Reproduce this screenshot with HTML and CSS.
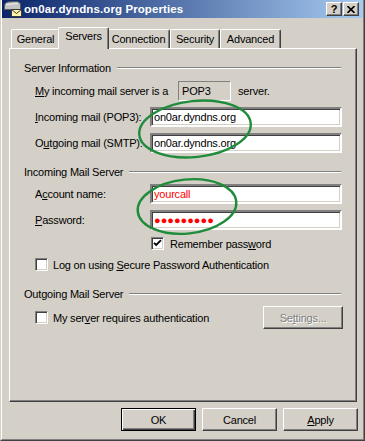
FILE: index.html
```html
<!DOCTYPE html>
<html>
	<head>
		<title>on0ar.dyndns.org Properties</title>
		<link rel="stylesheet" href="styles.css">
	</head>
	<body>
		<div class="window">
			<div class="frame">
				<div class="titlebar">
					<svg class="app-icon" width="19" height="18" viewBox="0 0 19 18">
						<path d="M1.5 9.5 L1.5 6 Q1.5 2.5 5 2 L13 1.5 Q17.5 1.5 17.5 5.5 L17.5 9.5 Z" fill="#c4c4c4" stroke="#5a5a5a"/>
						<path d="M3 4.5 L15 3.5" stroke="#f0f0f0"/>
						<rect x="8.5" y="9.5" width="10" height="7" fill="#fff6a8" stroke="#3a3a3a"/>
						<path d="M8.5 9.5 L13.5 13.5 L18.5 9.5" fill="none" stroke="#3a3a3a"/>
					</svg>
					<span class="title">on0ar.dyndns.org Properties</span>
					<button class="cap-btn">?</button>
					<button class="cap-btn close">
						<svg width="8" height="7" viewBox="0 0 8 7"><path d="M0.5 0 L7.5 7 M7.5 0 L0.5 7" stroke="#000" stroke-width="1.6"/></svg>
					</button>
				</div>
				<div class="body">
					<div class="tabs">
						<div class="tab t-general">General</div>
						<div class="tab active t-servers">Servers</div>
						<div class="tab t-connection">Connection</div>
						<div class="tab t-security">Security</div>
						<div class="tab t-advanced">Advanced</div>
					</div>
					<div class="panel">
						<div class="group-head"><span>Server Information</span><i class="etch"></i></div>
						<div class="row first">
							<span class="lead"><u>M</u>y incoming mail server is a</span>
							<span class="static">POP3</span>
							<span class="after">server.</span>
						</div>
						<div class="row">
							<span class="lbl"><u>I</u>ncoming mail (POP3):</span>
							<span class="edit">on0ar.dyndns.org</span>
						</div>
						<div class="row">
							<span class="lbl">O<u>u</u>tgoing mail (SMTP):</span>
							<span class="edit">on0ar.dyndns.org</span>
						</div>

						<div class="group-head gap"><span>Incoming Mail Server</span><i class="etch"></i></div>
						<div class="row">
							<span class="lbl">A<u>c</u>count name:</span>
							<span class="edit red">yourcall</span>
						</div>
						<div class="row">
							<span class="lbl"><u>P</u>assword:</span>
							<span class="edit red dots">●●●●●●●●●</span>
						</div>
						<div class="row remember">
							<span class="check on">
								<svg width="9" height="9" viewBox="0 0 9 9"><path d="M1 3.8 L3.2 6 L8 1.2" fill="none" stroke="#000" stroke-width="1.8"/></svg>
							</span>
							<span class="check-text">Remember pass<u>w</u>ord</span>
						</div>
						<div class="row logon">
							<span class="check"></span>
							<span class="check-text">Log on using <u>S</u>ecure Password Authentication</span>
						</div>

						<div class="group-head gap-lg"><span>Outgoing Mail Server</span><i class="etch"></i></div>
						<div class="row auth">
							<span class="check"></span>
							<span class="check-text">My ser<u>v</u>er requires authentication</span>
							<button class="btn settings">Se<u>t</u>tings...</button>
						</div>
					</div>
					<div class="actions">
						<button class="btn default">OK</button>
						<button class="btn">Cancel</button>
						<button class="btn"><u>A</u>pply</button>
					</div>
				</div>
			</div>
			<svg class="marks" width="365" height="441" viewBox="0 0 365 441">
				<ellipse cx="195" cy="129" rx="56" ry="28" transform="rotate(-6 195 129)"/>
				<ellipse cx="187" cy="206.5" rx="49.5" ry="27" transform="rotate(-6 187 206.5)"/>
			</svg>
		</div>
	</body>
</html>
```
FILE: styles.css
```css
* {
	box-sizing: border-box;
}
body {
	margin: 0;
	background-color: #d4d0c8;
	font-family: "Liberation Sans", Arial, sans-serif;
	font-size: 11px;
	letter-spacing: -0.2px;
	color: #000;
}
u {
	text-underline-offset: 1px;
}
.window {
	position: relative;
	width: 365px;
	height: 441px;
	border-left: 1px solid #d4d0c8;
	border-right: 1px solid #404040;
	border-bottom: 1px solid #404040;
}
.frame {
	height: 100%;
	display: flex;
	flex-direction: column;
	border-left: 1px solid #fff;
	border-right: 1px solid #808080;
	border-bottom: 1px solid #808080;
}

/* caption */
.titlebar {
	height: 18px;
	display: flex;
	align-items: center;
	padding: 0 4px 0 1px;
	background: linear-gradient(to right, #0a246a, #a6caf0);
	color: #fff;
}
.app-icon {
	flex: none;
}
.title {
	flex: 1;
	margin-left: 2px;
	font-weight: bold;
	font-size: 11.5px;
	letter-spacing: 0.1px;
}
.cap-btn {
	width: 16px;
	height: 14px;
	padding: 0;
	display: flex;
	align-items: center;
	justify-content: center;
	font-family: "Liberation Sans", Arial, sans-serif;
	font-weight: bold;
	font-size: 11px;
	color: #000;
	background-color: #d4d0c8;
	border: 1px solid;
	border-color: #fff #404040 #404040 #fff;
	box-shadow: inset -1px -1px #808080;
}
.cap-btn.close {
	margin-left: 1px;
}

/* tabs + panel */
.body {
	flex: 1;
	padding: 9px 5px 0 7px;
}
.tabs {
	position: relative;
	z-index: 1;
	display: flex;
	align-items: flex-end;
	height: 21px;
	padding-left: 2px;
}
.tab {
	height: 19px;
	padding-top: 3px;
	text-align: center;
	background-color: #d4d0c8;
	border-top: 1px solid #fff;
	border-left: 1px solid #fff;
	border-right: 1px solid #404040;
	border-radius: 2px 2px 0 0;
	box-shadow: inset -1px 0 #808080;
}
.t-general { width: 49px; }
.t-servers { width: 51px; }
.t-connection { width: 63px; }
.t-security { width: 50px; }
.t-advanced { width: 61px; }
.tab.active {
	height: 22px;
	margin: 0 -2px -1px;
	padding-top: 2px;
	position: relative;
}
.panel {
	height: 354px;
	margin-right: 1px;
	padding: 12px 14px 0 14px;
	border: 1px solid;
	border-color: #fff #404040 #404040 #fff;
	box-shadow: inset -1px -1px #808080;
}
.group-head {
	display: flex;
	align-items: center;
	height: 13px;
}
.group-head.gap {
	margin-top: 12px;
}
.group-head.gap-lg {
	margin-top: 16px;
}
.etch {
	flex: 1;
	margin: 0 1px 0 6px;
	border-top: 1px solid #808080;
	border-bottom: 1px solid #fff;
}
.row {
	display: flex;
	align-items: center;
	height: 20px;
	margin: 6px 0 0 11px;
}
.row.first {
	margin-top: 7px;
}
.lead {
	width: 143px;
}
.static {
	width: 53px;
	height: 20px;
	padding-left: 3px;
	line-height: 18px;
	border: 1px solid;
	border-color: #808080 #fff #fff #808080;
}
.after {
	margin-left: 7px;
}
.lbl {
	width: 115px;
}
.edit {
	flex: 1;
	height: 20px;
	padding: 0 2px;
	line-height: 16px;
	background-color: #fff;
	border: 2px solid;
	border-color: #808080 #fff #fff #808080;
	box-shadow: inset 1px 1px #404040, inset -1px -1px #d4d0c8;
}
.red {
	color: #f00;
}
.dots {
	font-size: 11px;
	letter-spacing: 0;
}

/* checkboxes */
.check {
	flex: none;
	width: 13px;
	height: 13px;
	display: flex;
	align-items: center;
	justify-content: center;
	background-color: #fff;
	border: 1px solid;
	border-color: #808080 #fff #fff #808080;
	box-shadow: inset 1px 1px #404040, inset -1px -1px #d4d0c8;
}
.check-text {
	margin-left: 6px;
}
.row.remember {
	height: 13px;
	margin: 7px 0 0 127px;
}
.row.logon {
	height: 13px;
	margin-top: 8px;
}
.row.auth {
	height: 23px;
	margin-top: 6px;
}
.row.auth .check-text,
.row.logon .check-text {
	margin-left: 5px;
}

/* push buttons */
.btn {
	width: 75px;
	height: 23px;
	padding: 0;
	font-family: inherit;
	font-size: 11px;
	letter-spacing: -0.2px;
	color: #000;
	background-color: #d4d0c8;
	border: 1px solid;
	border-color: #fff #404040 #404040 #fff;
	box-shadow: inset -1px -1px #808080;
}
.btn.default {
	border-color: #000;
	box-shadow: inset 1px 1px #fff, inset -1px -1px #404040, inset -2px -2px #808080;
}
.btn.settings {
	width: 80px;
	margin: 0 -1px 0 auto;
	color: #808080;
	text-shadow: 1px 1px #fff;
}
.actions {
	display: flex;
	justify-content: flex-end;
	gap: 6px;
	margin-top: 6px;
}

/* green pen marks drawn over the dialog */
.marks {
	position: absolute;
	left: -1px;
	top: 0;
	pointer-events: none;
}
.marks ellipse {
	fill: none;
	stroke: #1f8c3b;
	stroke-width: 2.4;
}
```
